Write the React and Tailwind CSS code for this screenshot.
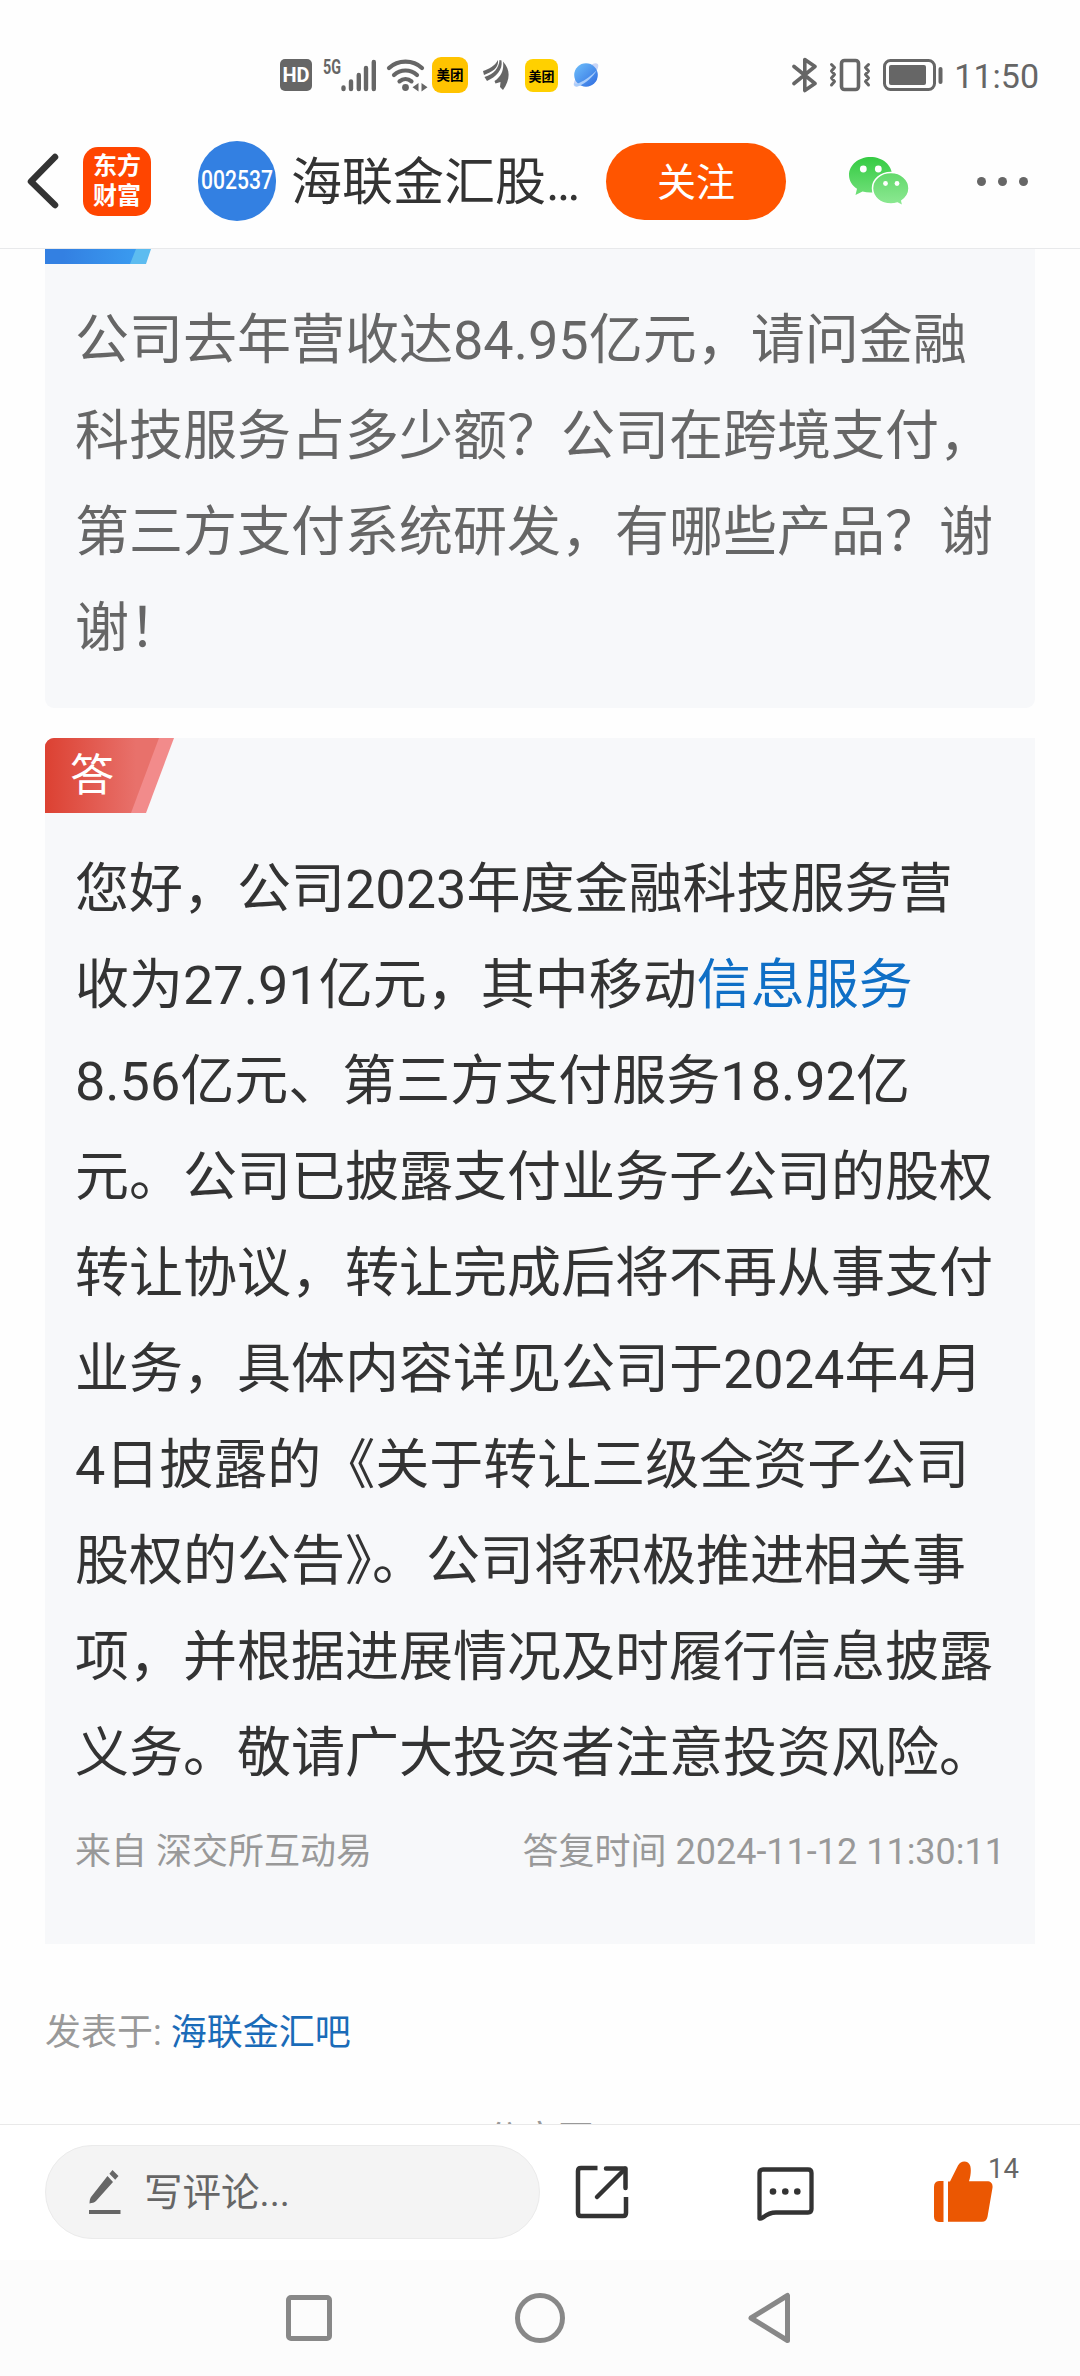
const questionLines = [
  "公司去年营收达84.95亿元，请问金融",
  "科技服务占多少额？公司在跨境支付，",
  "第三方支付系统研发，有哪些产品？谢",
  "谢！",
];

const answerLines = [
  "您好，公司2023年度金融科技服务营",
  ["收为27.91亿元，其中移动", "信息服务"],
  "8.56亿元、第三方支付服务18.92亿",
  "元。公司已披露支付业务子公司的股权",
  "转让协议，转让完成后将不再从事支付",
  "业务，具体内容详见公司于2024年4月",
  "4日披露的《关于转让三级全资子公司",
  "股权的公告》。公司将积极推进相关事",
  "项，并根据进展情况及时履行信息披露",
  "义务。敬请广大投资者注意投资风险。",
];

const StatusBar = () => (
  <div className="flex h-[100px] pt-[50px] text-[#666]">
    {/* Left icons */}
    <div className="flex h-[50px] items-center pl-[280px]">
      <div className="flex h-[32px] w-[32px] items-center justify-center rounded-[5px] bg-[#666] text-[20px] leading-none font-bold text-white font-['Roboto',sans-serif]">
        HD
      </div>
      <svg className="ml-[11px] overflow-visible" width="54" height="36" viewBox="0 0 54 36">
        <text x="0" y="17" fontSize="21" fontWeight="700" fontFamily="Roboto, sans-serif" fill="#666" textLength="18" lengthAdjust="spacingAndGlyphs">
          5G
        </text>
        <g stroke="#666" strokeWidth="4.4" strokeLinecap="round">
          <path d="M20.5 30.5v1.5M28 24.500v7.500M35.800 18v14M43 11v21M50.800 5v27" />
        </g>
      </svg>
      <svg className="ml-[9px]" width="42" height="36" viewBox="0 0 42 36">
        <g fill="none" stroke="#666" strokeWidth="4.2" strokeLinecap="round">
          <path d="M3 11c9-8.500 24-8.500 33 0" />
          <path d="M8 18c6.500-6 16.500-6 23 0" />
          <path d="M13.500 24.300c3.500-3 8.500-3 12 0" />
        </g>
        <circle cx="19.500" cy="30.500" r="3.400" fill="#666" />
        <path d="M32.500 26v8.500l-6-4.200zM35.500 26v8.500l6-4.200z" fill="#666" />
      </svg>
      <div className="ml-[4px] flex h-[36px] w-[36px] items-center justify-center rounded-[9px] bg-[#ffc300] text-[13.500px] leading-none font-bold text-black font-['Noto_Sans_CJK_SC',sans-serif]">
        美团
      </div>
      <svg className="ml-[15px]" width="26" height="32" viewBox="0 0 26 32">
        <g fill="#666">
          <path d="M0 12C6 10 12 7 15 1c1 8-6 12-14 15z" />
          <path d="M16.500 1l2 .5C20 11 13 18 4 22l-2.500-4C11 15 16 9 16.500 1z" />
          <path d="M20 2.500C28 11 27 21 20 31l-3-3 .5-5-5 1.500-1-2.500C19 17 21 10 20 2.500z" />
        </g>
      </svg>
      <div className="ml-[16px] flex h-[33px] w-[33px] items-center justify-center rounded-[8px] bg-[#ffd000] text-[13px] leading-none font-bold text-black font-['Noto_Sans_CJK_SC',sans-serif]">
        美团
      </div>
      <svg className="ml-[14px]" width="28" height="28" viewBox="0 0 28 28">
        <defs>
          <linearGradient id="planet" x1="0" y1="0" x2="1" y2="1">
            <stop offset="0" stopColor="#6fc0fb" />
            <stop offset="1" stopColor="#2f6be0" />
          </linearGradient>
        </defs>
        <ellipse cx="14" cy="14" rx="16" ry="5.500" transform="rotate(-43 14 14)" fill="#c9d6f7" />
        <circle cx="14" cy="14" r="11.800" fill="url(#planet)" />
        <path d="M2 22c0 3 2 4 5 3 7-3 14-9 18-16-6 6-12 10.500-18 13-2 .8-4 1-5 0z" fill="#a9cdfb" />
      </svg>
    </div>

    {/* Right icons */}
    <div className="ml-auto flex h-[50px] items-center pr-[41px]">
      <svg width="28" height="36" viewBox="0 0 28 36" fill="none" stroke="#666" strokeWidth="3.600" strokeLinejoin="round" strokeLinecap="round">
        <path d="M3 9.500l21 17L13.800 33.500V2.500L24 9.500 3 26.500" />
      </svg>
      <svg className="ml-[10px]" width="42" height="36" viewBox="0 0 42 36" fill="none" stroke="#666" strokeWidth="3.600" strokeLinejoin="round" strokeLinecap="round">
        <rect x="12.500" y="3.500" width="17" height="29" rx="3" />
        <path strokeWidth="3" d="M2.500 7.500l3 3-3 3.500 3 3.500-3 3.500 3 3.500-3 3.500M39.500 7.500l-3 3 3 3.500-3 3.500 3 3.500-3 3.500 3 3.500" />
      </svg>
      <svg className="ml-[12px]" width="60" height="36" viewBox="0 0 60 36">
        <rect x="1.500" y="3.500" width="50" height="29" rx="6" fill="none" stroke="#666" strokeWidth="3" />
        <rect x="6" y="8" width="37" height="20" rx="2" fill="#666" />
        <path d="M57.500 12v13" stroke="#666" strokeWidth="4" strokeLinecap="round" />
      </svg>
      <span className="ml-[11px] pt-[2px] text-[34px] leading-none">11:50</span>
    </div>
  </div>
);

const TopBar = () => (
  <div className="flex h-[149px] items-center border-b border-[#e8e9eb] pt-[14px]">
    <svg className="ml-[26px]" width="34" height="58" viewBox="0 0 34 58" fill="none" stroke="#333" strokeWidth="6.500" strokeLinecap="round" strokeLinejoin="round">
      <path d="M29 5L5 29.500 29 53" />
    </svg>
    <div className="ml-[23px] flex h-[69px] w-[68px] flex-col items-center justify-center rounded-[15px] bg-[#ff4500] text-[24px] leading-[30px] font-bold text-white">
      <span>东方</span>
      <span>财富</span>
    </div>
    <div className="ml-[47px] flex h-[80px] w-[78px] items-center justify-center rounded-full bg-[#3380e2] text-white">
      <svg className="overflow-visible" width="74" height="36" viewBox="0 0 74 36">
        <text x="1" y="25.500" fontSize="25.500" fontWeight="500" fontFamily="Roboto, sans-serif" fill="#fff" textLength="72" lengthAdjust="spacingAndGlyphs">
          002537
        </text>
      </svg>
    </div>
    <h1 className="ml-[15px] w-[315px] pt-[3px] text-[51px] leading-[76px] text-[#333]">海联金汇股…</h1>
    <button className="h-[77px] w-[180px] rounded-full bg-[#ff5500] pt-[3px] text-[39px] leading-[74px] text-white">
      关注
    </button>
    <svg className="ml-[62px]" width="62" height="52" viewBox="0 0 62 52">
      <defs>
        <linearGradient id="chatA" x1="0" y1="0" x2="0" y2="1">
          <stop offset="0" stopColor="#35cb43" />
          <stop offset="1" stopColor="#6fdf78" />
        </linearGradient>
        <linearGradient id="chatB" x1="0" y1="0" x2="0" y2="1">
          <stop offset="0" stopColor="#62d96b" />
          <stop offset="1" stopColor="#8ee994" />
        </linearGradient>
      </defs>
      <path d="M22.500 2C10.500 2 1 10 1 20c0 5.600 3 10.500 8 13.800L7.500 40l7-3.500c2.500.7 5.200 1 8 1C34.500 37.500 44 30 44 20S34.500 2 22.500 2z" fill="url(#chatA)" />
      <path d="M43 17.500C32.500 17.500 24.500 24.500 24.500 33.300S32.500 49 43 49c2.300 0 4.500-.4 6.500-1l5.500 3-1.200-5.200c4.400-3 7.200-7.300 7.200-12.500 0-8.800-8-15.800-18-15.800z" fill="url(#chatB)" stroke="#fff" strokeWidth="1.500" />
      <g fill="#fff">
        <circle cx="15.300" cy="14" r="3.400" />
        <circle cx="30.300" cy="14" r="3.400" />
        <circle cx="37.500" cy="28.500" r="2.400" />
        <circle cx="49" cy="28.500" r="2.400" />
      </g>
    </svg>
    <div className="ml-[67px] flex gap-3">
      <i className="h-[9px] w-[9px] rounded-full bg-[#666]" />
      <i className="h-[9px] w-[9px] rounded-full bg-[#666]" />
      <i className="h-[9px] w-[9px] rounded-full bg-[#666]" />
    </div>
  </div>
);

const QuestionCard = () => (
  <section className="h-[459px] rounded-b-[9px] bg-[#f7f8fa]">
    <svg width="106" height="15" viewBox="0 0 106 15" className="block">
      <defs>
        <linearGradient id="ask" x1="0" y1="0" x2="1" y2="0">
          <stop offset="0.2" stopColor="#3380e2" />
          <stop offset="1" stopColor="#3a9bf0" />
        </linearGradient>
      </defs>
      <path d="M0 0h106l-5 15H0z" fill="#5dbcf0" />
      <path d="M0 0h91l-6 15H0z" fill="url(#ask)" />
    </svg>
    <div className="px-[30px] pt-[29px] text-[54px] leading-[96px] whitespace-nowrap text-[#666]">
      {questionLines.map((line) => (
        <p key={line}>{line}</p>
      ))}
    </div>
  </section>
);

const AnswerCard = () => (
  <section className="mt-[30px] h-[1206px] overflow-hidden rounded-tl-[9px] bg-[#f7f8fa]">
    <svg width="130" height="75" viewBox="0 0 130 75" className="block">
      <defs>
        <linearGradient id="reply" x1="0" y1="0" x2="1" y2="0">
          <stop offset="0" stopColor="#dc4132" />
          <stop offset="0.8" stopColor="#e8716b" />
        </linearGradient>
      </defs>
      <path d="M0 0h129l-28 75H0z" fill="#f28b8b" />
      <path d="M0 0h114L86 75H0z" fill="url(#reply)" />
      <text x="25" y="53" fontSize="44" fill="#fff">答</text>
    </svg>
    <div className="px-[30px] pt-[29px] text-[54px] leading-[96px] whitespace-nowrap text-[#333]">
      {answerLines.map((line, i) =>
        Array.isArray(line) ? (
          <p key={i}>
            {line[0]}
            <a className="text-[#0f6fc6]">{line[1]}</a>
          </p>
        ) : (
          <p key={i}>{line}</p>
        )
      )}
    </div>
    <div className="flex justify-between px-[30px] pt-[23px] text-[36px] leading-[54px] text-[#999]">
      <span>来自 深交所互动易</span>
      <span>答复时间 2024-11-12 11:30:11</span>
    </div>
  </section>
);

const CommentBar = () => (
  <div className="flex h-[136px] items-center border-t border-[#e9e9e9] bg-white pb-[1px]">
    <div className="ml-[45px] flex h-[94px] w-[495px] items-center rounded-full border border-[#ebebeb] bg-[#f4f4f4]">
      <svg className="ml-[42px]" width="34" height="46" viewBox="0 0 34 46" fill="#666">
        <path d="M24.500 1l6 6-3.300 3.800-5.800-6zM19.500 7l5.500 6L8 32c-1.500 1.500-4 2-6.500 2.500.2-2.800.3-4.700 1.500-6.500z" />
        <path d="M1 41h31.500v4H1z" />
      </svg>
      <span className="ml-[22px] pt-[2px] text-[38.500px] leading-[60px] text-[#666]">写评论...</span>
    </div>
    <svg className="ml-[35px]" width="54" height="54" viewBox="0 0 54 54" fill="none" stroke="#333" strokeWidth="4.500">
      <path d="M22.500 3H6Q3 3 3 6v42q0 3 3 3h42q3 0 3-3V32" />
      <path d="M31 3.500h19.500V23" strokeLinecap="round" strokeLinejoin="round" />
      <path d="M50 4L22 32" strokeLinecap="round" />
    </svg>
    <svg className="ml-[127px] mt-[4px]" width="58" height="56" viewBox="0 0 58 56" fill="none" stroke="#333" strokeWidth="4.300" strokeLinejoin="round">
      <path d="M3.500 52.500V7q0-3.500 3.500-3.500h45q3.500 0 3.500 3.500v36q0 3.500-3.500 3.500H20q-7 0-13 5-2.500 1.700-3.500 1z" />
      <g fill="#333" stroke="none">
        <circle cx="17" cy="25.500" r="3.300" />
        <circle cx="29.300" cy="25.500" r="3.300" />
        <circle cx="41.300" cy="25.500" r="3.300" />
      </g>
    </svg>
    <svg className="ml-[119px]" width="60" height="62" viewBox="0 0 60 62" fill="#eb5702">
      <path d="M10.500 20v41H6q-5-.5-5-5.500V26q0-5.500 5-6z" />
      <path d="M15 20.500h2L25 4.500c3-5.500 10.500-5 12.300.5 1 4 .5 9.500-1.300 15.300h18c4 0 6 2.500 5.500 6.500l-5 29c-.5 3-2.500 5-5.500 5H15z" />
    </svg>
    <span className="-ml-[5px] -mt-[46px] text-[27.500px] leading-none text-[#666]">14</span>
  </div>
);

const NavBar = () => (
  <div className="flex h-[116px] items-center justify-center gap-[182px] bg-[#fcfcfc] pr-[4px]">
    <svg width="48" height="50" viewBox="0 0 48 50" fill="none" stroke="#888" strokeWidth="5">
      <rect x="3.500" y="4.500" width="41" height="41" rx="2.500" />
    </svg>
    <svg width="50" height="50" viewBox="0 0 50 50" fill="none" stroke="#888" strokeWidth="5">
      <circle cx="25" cy="25" r="22.500" />
    </svg>
    <svg width="45" height="52" viewBox="0 0 45 52" fill="none" stroke="#888" strokeWidth="5" strokeLinejoin="round">
      <path d="M40.500 3.500v45L4 26z" />
    </svg>
  </div>
);

const App = () => {
  return (
    <div
      lang="zh-CN"
      className="flex h-[2376px] w-[1080px] flex-col overflow-hidden bg-[#fefefe] font-['Roboto','Noto_Sans_CJK_SC',sans-serif]"
    >
      <StatusBar />
      <TopBar />

      <main className="h-[1875px] overflow-hidden px-[45px]">
        <QuestionCard />
        <AnswerCard />
        <p className="mt-[62px] text-[36px] leading-[54px] text-[#999]">
          发表于: <a className="text-[#1a6bb8]">海联金汇吧</a>
        </p>
        <p className="mt-[53px] text-center text-[36px] leading-[54px] text-[#999]">分享至</p>
      </main>

      <CommentBar />
      <NavBar />
    </div>
  );
};

export default App;
